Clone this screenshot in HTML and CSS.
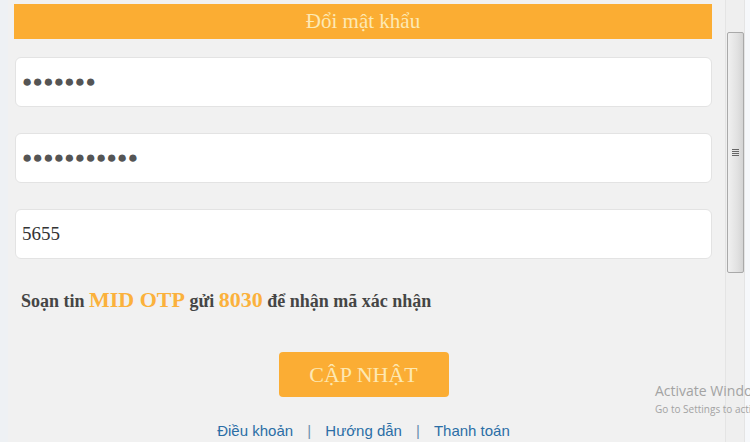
FILE: index.html
```html
<!DOCTYPE html>
<html lang="vi">
<head>
    <meta charset="UTF-8">
    <meta name="viewport" content="width=device-width, initial-scale=1.0">
    <title>Đổi mật khẩu</title>
<link rel="stylesheet" href="styles.css">
</head>
<body>
    <div class="window">
        <div class="page">
            <div class="title">Đổi mật khẩu</div>

            <form class="form" onsubmit="return false">
                <div class="field pass">●●●●●●●</div>
                <div class="field pass">●●●●●●●●●●●</div>
                <div class="field">5655</div>

                <p class="hint">Soạn tin <span class="hl">MID OTP</span> gửi <span class="hl">8030</span> để nhận mã xác nhận</p>

                <div class="actions">
                    <button class="update" type="submit">CẬP NHẬT</button>
                </div>

                <div class="links">
                    <a href="#">Điều khoản</a>
                    <span class="sep">|</span>
                    <a href="#">Hướng dẫn</a>
                    <span class="sep">|</span>
                    <a href="#">Thanh toán</a>
                </div>
            </form>
        </div>

        <!-- thanh cuộn giả -->
        <div class="scrollbar">
            <div class="track">
                <div class="thumb"><span class="grip"></span></div>
            </div>
        </div>
    </div>

    <div class="watermark">
        <div class="wm-title">Activate Windows</div>
        <div class="wm-sub">Go to Settings to activate Windows.</div>
    </div>
</body>
</html>
```

FILE: styles.css
```css
html, body{
    margin: 0;
    padding: 0;
    height: 100%;
    overflow: hidden;
}
body{
    background: #f1f1f1;
    font-family: "Liberation Serif", "Times New Roman", serif;
    position: relative;
}
.window{
    display: flex;
    height: 442px;
}
.page{
    flex: 1;
    padding: 4px 13px 0 14px;
    background: linear-gradient(to right, #eef1f4 0, #eef1f4 8px, #f1f1f1 8px);
}
.title{
    height: 35px;
    line-height: 35px;
    background: #fbad33;
    color: #fde9b4;
    text-align: center;
    font-size: 21px;
}
.form{
    margin: 0;
    padding: 18px 0 0 1px;
}
.field{
    height: 48px;
    line-height: 48px;
    background: #fff;
    border: 1px solid #e3e3e3;
    border-radius: 6px;
    padding: 0 6px;
    margin-bottom: 26px;
    font-family: "Liberation Serif", "Times New Roman", serif;
    font-size: 19px;
    color: #333;
}
.field.pass{
    font-family: "Liberation Sans", Arial, sans-serif;
    font-size: 17px;
    color: #555;
    letter-spacing: 0.3px;
}
.field:last-of-type{
    margin-bottom: 0;
}
.hint{
    margin: 29px 0 0 6px;
    line-height: 24px;
    font-size: 18px;
    font-weight: bold;
    color: #454545;
}
.hl{
    color: #fbb13c;
    font-size: 22px;
}
.actions{
    text-align: center;
    margin-top: 39px;
}
.update{
    width: 170px;
    height: 45px;
    border: none;
    border-radius: 4px;
    background: #fbad34;
    color: #fde8b2;
    font-family: "Liberation Serif", "Times New Roman", serif;
    font-size: 22px;
    cursor: pointer;
}
.links{
    margin-top: 24px;
    text-align: center;
    line-height: 20px;
    font-family: "Liberation Sans", Arial, sans-serif;
    font-size: 15px;
}
.links a{
    color: #2b6ea6;
    text-decoration: none;
}
.sep{
    color: #6b8fae;
    margin: 0 10px;
}

/* scrollbar */
.scrollbar{
    width: 25px;
    background: #f6f8fb;
}
.track{
    width: 20px;
    height: 100%;
    background: #efefef;
    border-left: 1px solid #e4e4e4;
    border-right: 1px solid #e4e4e4;
    box-sizing: border-box;
    padding-top: 32px;
}
.thumb{
    margin-left: 1px;
    width: 17px;
    height: 241px;
    box-sizing: border-box;
    border: 1px solid #a9a9a9;
    border-radius: 2px;
    background: linear-gradient(to right, #f0f0f0, #e2e2e2 60%, #d4d4d4);
    display: flex;
    align-items: center;
    justify-content: center;
}
.grip{
    width: 7px;
    height: 7px;
    background: repeating-linear-gradient(to bottom, #666 0, #666 1px, transparent 1px, transparent 2px);
}

.watermark{
    position: absolute;
    left: 655px;
    top: 382px;
    white-space: nowrap;
    font-family: "Open Sans", "Noto Sans", sans-serif;
    color: #a3a3a3;
}
.wm-title{
    font-size: 14px;
    line-height: 18px;
}
.wm-sub{
    font-size: 10px;
    line-height: 14px;
    margin-top: 2px;
}
```
